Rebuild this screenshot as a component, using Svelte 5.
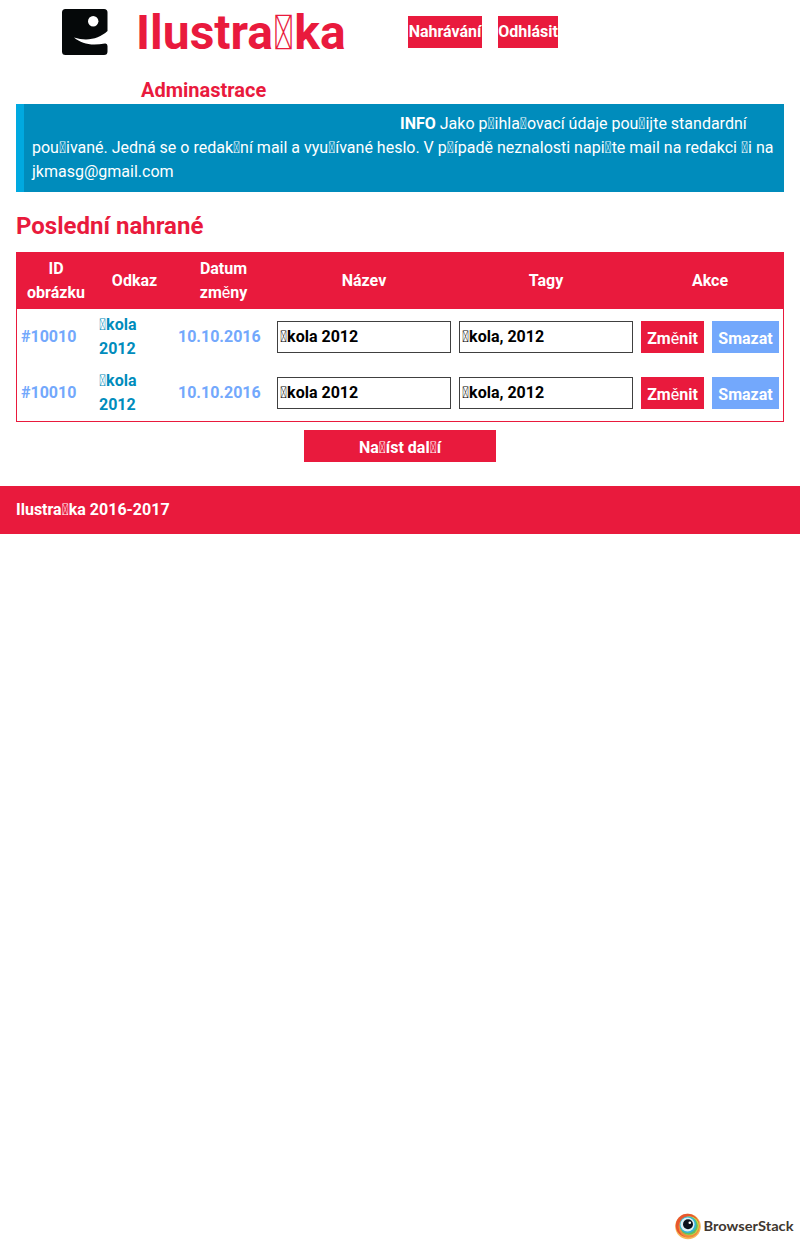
<script>
  const rows = [
    { id: '#10010', name: '\uE000kola 2012', date: '10.10.2016', tags: '\uE000kola, 2012' },
    { id: '#10010', name: '\uE000kola 2012', date: '10.10.2016', tags: '\uE000kola, 2012' }
  ];
</script>

<header>
  <div class="brand">
    <svg class="logo" viewBox="0 0 46 46" width="46" height="46">
      <path d="M3.500 0H42Q45.500 0 45.500 3.500V22C37 30 25 32.500 12 28.500C20 35 29 37 43 34.500Q45.500 34.200 45.500 37V42.500Q45.500 46 42 46H3.500Q0 46 0 42.500V3.500Q0 0 3.500 0Z" fill="#050809" />
      <circle cx="31.200" cy="12.300" r="5.200" fill="#fff" />
    </svg>
    <div class="titles">
      <h1>Ilustra{'\uE000'}ka</h1>
      <p class="subtitle">Adminastrace</p>
    </div>
  </div>
  <nav>
    <a class="upload" href="#upload">Nahrávání</a>
    <a class="logout" href="#logout">Odhlásit</a>
  </nav>
</header>

<main>
  <p class="info">
    <strong>INFO</strong> Jako p{'\uE000'}ihla{'\uE000'}ovací údaje pou{'\uE000'}ijte standardní pou{'\uE000'}ivané. Jedná se o redak{'\uE000'}ní mail a vyu{'\uE000'}ívané heslo. V p{'\uE000'}ípadě neznalosti napi{'\uE000'}te mail na redakci {'\uE000'}i na jkmasg@gmail.com
  </p>
  <h2>Poslední nahrané</h2>
  <table>
    <colgroup>
      <col class="c-id" /><col class="c-link" /><col class="c-date" /><col class="c-field" /><col class="c-field" /><col />
    </colgroup>
    <thead>
      <tr>
        <th>ID obrázku</th><th>Odkaz</th><th>Datum zm<i>ě</i>ny</th><th>Název</th><th>Tagy</th><th>Akce</th>
      </tr>
    </thead>
    <tbody>
      {#each rows as row}
        <tr>
          <td class="soft">{row.id}</td>
          <td class="link">{row.name}</td>
          <td class="soft">{row.date}</td>
          <td><input value={row.name} /></td>
          <td><input value={row.tags} /></td>
          <td><div class="actions"><button class="edit">Zm<i>ě</i>nit</button><button class="delete">Smazat</button></div></td>
        </tr>
      {/each}
    </tbody>
  </table>
  <button class="more">Na{'\uE000'}íst dal{'\uE000'}í</button>
</main>

<footer>Ilustra{'\uE000'}ka 2016-2017</footer>

<div class="sponsor">
  <svg width="120" height="28" viewBox="0 0 120 28">
    <circle cx="14" cy="13.500" r="12.800" fill="#f5b85a" />
    <circle cx="13.500" cy="12.500" r="11.800" fill="#e8572e" />
    <circle cx="15" cy="14" r="10.500" fill="#f08a3c" />
    <circle cx="15.500" cy="12.700" r="9.500" fill="#c5d944" />
    <circle cx="14.800" cy="12.800" r="9" fill="#68bb59" />
    <circle cx="14" cy="11.800" r="8.400" fill="#35b5d5" />
    <circle cx="13.500" cy="11.500" r="7" fill="#d9f0f5" />
    <circle cx="14" cy="11.300" r="5" fill="#0b111b" />
    <circle cx="15.800" cy="9.700" r="1.300" fill="#fff" />
    <text x="29.500" y="18.300" textLength="90" lengthAdjust="spacingAndGlyphs">BrowserStack</text>
  </svg>
</div>

<style>
  :global(body) {
    font-family: Roboto, sans-serif;
    font-size: 16px;
    line-height: 24px;
    background: #fff;
    color: #000;
  }
  :global(#app) {
    min-height: 1246px;
    display: flex;
    flex-direction: column;
  }
  header {
    height: 104px;
    display: grid;
    grid-template-columns: 400px 1fr;
  }
  .brand { display: flex; padding-left: 62px; }
  .logo { margin-top: 9px; flex: none; }
  .titles { padding-left: 28px; }
  h1, h2, p { margin: 0; }
  h1 { padding-top: 1px; font-size: 48px; line-height: 64px; color: #e91a3d; font-weight: 700; }
  .subtitle { margin: 13px 0 0 5px; font-size: 20px; line-height: 24px; font-weight: 700; color: #e91a3d; }
  nav { display: flex; gap: 16px; padding: 16px 8px; align-items: flex-start; }
  nav a { background: #e91a3d; color: #fff; font-weight: 700; line-height: 32px; text-decoration: none; text-align: center; }
  .upload { width: 74px; }
  .logout { width: 60px; }
  main { padding: 0 16px; }
  .info {
    box-sizing: border-box;
    height: 88px;
    padding: 8px;
    border-left: 8px solid #00a9e0;
    background: #008cbc;
    color: #fff;
    text-indent: 368px;
  }
  h2 { margin: 16px 0 8px; font-size: 24px; line-height: 36px; color: #e91a3d; }
  table {
    width: 100%;
    table-layout: fixed;
    border: 1px solid #e91a3d;
    border-collapse: separate;
    border-spacing: 0;
    box-sizing: border-box;
    font-weight: 700;
  }
  .c-id { width: 78px; }
  .c-link { width: 79px; }
  .c-date { width: 99px; }
  .c-field { width: 182px; }
  th, td { padding: 4px; box-sizing: border-box; height: 56px; }
  th { background: #e91a3d; color: #fff; }
  td { text-align: left; }
  i { font-style: normal; font-weight: 400; }
  .soft { color: #73a8fc; }
  .link { color: #008cbc; }
  input {
    display: block;
    box-sizing: border-box;
    width: 100%;
    height: 32px;
    padding: 0 2px 1px;
    border: 1px solid #404040;
    font: 700 16px Roboto, sans-serif;
    color: #000;
  }
  .actions { display: flex; gap: 8px; }
  button {
    height: 32px;
    padding: 2px 0 0;
    border: 0;
    background: #e91a3d;
    color: #fff;
    font: 700 16px Roboto, sans-serif;
  }
  .edit { width: 63px; }
  .delete { width: 67px; background: #73a8fc; }
  .more { display: block; width: 192px; margin: 8px auto 24px; }
  footer { height: 48px; padding: 0 16px; background: #e91a3d; color: #fff; font-weight: 700; line-height: 47px; }
  .sponsor { margin-top: auto; align-self: flex-end; height: 28px; padding: 0 6px 5px 0; }
  .sponsor text { font: 700 14px Lato, sans-serif; fill: #40372f; }
</style>
